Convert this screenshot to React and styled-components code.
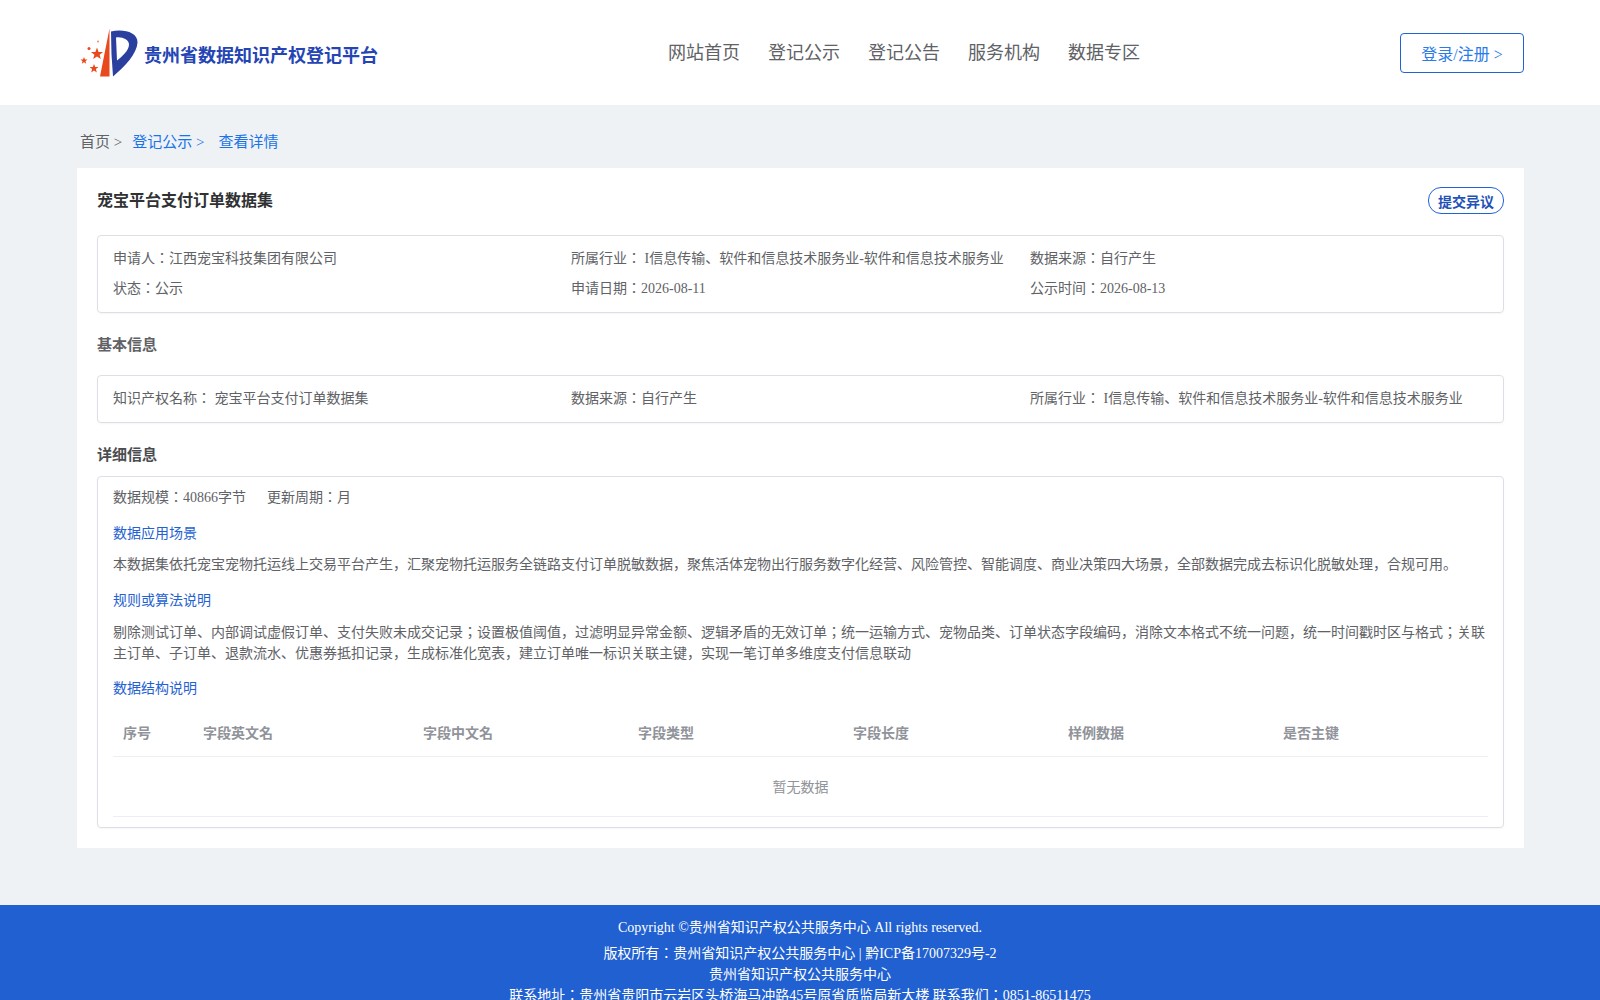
import React from "react";
import styled, { createGlobalStyle } from "styled-components";

const GlobalStyle = createGlobalStyle`
  * { box-sizing: border-box; }
  body {
    margin: 0;
    background: #eff2f5;
    font-family: "Liberation Serif", "Noto Sans CJK JP", serif;
    font-size: 14px;
    color: #606266;
  }
`;

const Header = styled.header`
  height: 105px;
  background: #fff;
  padding: 0 76px 0 80px;
  display: flex;
  align-items: center;
  justify-content: space-between;
`;

const Brand = styled.div`
  display: flex;
  align-items: center;
  width: 302px;
  gap: 6px;
  padding-top: 2px;
  span {
    font-size: 18px;
    font-weight: 700;
    color: #2545b5;
  }
`;

const Nav = styled.nav`
  display: flex;
  gap: 28px;
  margin: 0 0 4px 26px;
  a {
    font-size: 18px;
    color: #606266;
  }
`;

const LoginButton = styled.button`
  width: 124px;
  height: 40px;
  background: #fff;
  border: 1px solid #2062d8;
  border-radius: 4px;
  color: #2a7bea;
  font: inherit;
  font-size: 16px;
`;

const Crumbs = styled.div`
  display: flex;
  height: 63px;
  align-items: center;
  padding: 7px 0 0 80px;
  font-size: 15px;
  color: #606266;
`;

const Crumb = styled.a`
  color: ${(p) => (p.$active ? "#1a73e8" : "#606266")};
  margin-right: ${(p) => p.$gap}px;
`;

const Card = styled.main`
  margin: 0 76px 0 77px;
  background: #fff;
  padding: 20px;
`;

const TitleRow = styled.div`
  display: flex;
  justify-content: space-between;
  align-items: flex-start;
  height: 47px;
`;

const Title = styled.h1`
  margin: 1px 0 0;
  font-size: 16px;
  line-height: 24px;
  font-weight: 700;
  color: #303133;
`;

const ObjectionButton = styled.button`
  width: 76px;
  height: 27px;
  margin-top: -1px;
  padding: 0;
  background: #fff;
  border: 1px solid #2062d8;
  border-radius: 13px;
  color: #1f52b8;
  font: inherit;
  font-size: 14px;
  font-weight: 700;
`;

const Box = styled.section`
  border: 1px solid #dcdfe6;
  border-radius: 4px;
  padding: ${(p) => p.$padding || "0 15px"};
  box-shadow: 0 1px 2px rgba(0, 0, 0, 0.04);
`;

const InfoGrid = styled.div`
  display: grid;
  grid-template-columns: 458px 459px 1fr;
  padding: ${(p) => p.$padding};
  row-gap: ${(p) => p.$rowGap || 0}px;
  line-height: 20px;
`;

const SectionTitle = styled.h2`
  margin: 0;
  font-size: 15px;
  line-height: 20px;
  font-weight: 700;
  color: ${(p) => p.$color || "#606266"};
  padding: ${(p) => p.$padding};
`;

const MetaRow = styled.div`
  display: flex;
  gap: 21px;
  line-height: 20px;
  padding-top: 11px;
`;

const SubTitle = styled.h3`
  margin: 0;
  font-size: 14px;
  font-weight: 400;
  line-height: 20px;
  color: #1f62d0;
  padding: ${(p) => p.$top}px 0 ${(p) => p.$bottom}px;
`;

const Paragraph = styled.p`
  margin: 0;
  line-height: 21px;
  color: #606266;
`;

const Table = styled.table`
  width: 100%;
  border-collapse: collapse;
  table-layout: fixed;
  th {
    height: 48px;
    padding: 0 10px;
    text-align: left;
    font-weight: 700;
    font-size: 14px;
    color: #909399;
    border-bottom: 1px solid #ebeef5;
  }
  td {
    height: 60px;
    text-align: center;
    color: #909399;
    border-bottom: 1px solid #ebeef5;
  }
`;

const Footer = styled.footer`
  margin-top: 57px;
  background: #2060d0;
  color: #fff;
  text-align: center;
  padding: 12px 0 10px;
  line-height: 21px;
`;

const FooterTop = styled.div`
  margin-bottom: 5px;
`;

const Logo = () => (
  <svg width="58" height="52" viewBox="4 3.5 58 52">
    <path d="M33.5 4 L24 52 L33.5 52 Z" fill="#e8491d" />
    <path
      fillRule="evenodd"
      d="M35 7 C46 4 62 7 61.5 18 C61 29 49 42 37 52 L35.5 30 Z M40 13 C46 12 53 15 53 20 C53 26 46 32 41 36 Z"
      fill="#2b3f9f"
    />
    <polygon points="21,23 22.6,27.4 27,27.4 23.6,30.2 24.8,34.6 21,32 17.2,34.6 18.4,30.2 15,27.4 19.4,27.4" fill="#e8491d" />
    <polygon points="8,32.5 9,35 11.5,35 9.5,36.7 10.2,39.3 8,37.8 5.8,39.3 6.5,36.7 4.5,35 7,35" fill="#e8491d" />
    <polygon points="18,39.5 19.2,42.6 22.5,42.6 19.9,44.6 20.8,48 18,46 15.2,48 16.1,44.6 13.5,42.6 16.8,42.6" fill="#e8491d" />
    <circle cx="13" cy="24" r="1.5" fill="#e8491d" />
    <circle cx="22" cy="17" r="1" fill="#ee8a6a" />
  </svg>
);

const columns = ["序号", "字段英文名", "字段中文名", "字段类型", "字段长度", "样例数据", "是否主键"];
const widths = [80, 220, 215, 215, 215, 215, ""];

export default function App() {
  return (
    <>
      <GlobalStyle />
      <Header>
        <Brand>
          <Logo />
          <span>贵州省数据知识产权登记平台</span>
        </Brand>
        <Nav>
          <a>网站首页</a>
          <a>登记公示</a>
          <a>登记公告</a>
          <a>服务机构</a>
          <a>数据专区</a>
        </Nav>
        <LoginButton>登录/注册 &gt;</LoginButton>
      </Header>
      <Crumbs>
        <Crumb $gap={10}>首页 &gt;</Crumb>
        <Crumb $active $gap={14}>登记公示 &gt;</Crumb>
        <Crumb $active>查看详情</Crumb>
      </Crumbs>
      <Card>
        <TitleRow>
          <Title>宠宝平台支付订单数据集</Title>
          <ObjectionButton>提交异议</ObjectionButton>
        </TitleRow>
        <Box>
          <InfoGrid $padding="13px 0 13px" $rowGap={10}>
            <div>申请人：江西宠宝科技集团有限公司</div>
            <div>所属行业： I信息传输、软件和信息技术服务业-软件和信息技术服务业</div>
            <div>数据来源：自行产生</div>
            <div>状态：公示</div>
            <div>申请日期：2026-08-11</div>
            <div>公示时间：2026-08-13</div>
          </InfoGrid>
        </Box>
        <SectionTitle $padding="22px 0 20px">基本信息</SectionTitle>
        <Box>
          <InfoGrid $padding="13px 0 13px">
            <div>知识产权名称： 宠宝平台支付订单数据集</div>
            <div>数据来源：自行产生</div>
            <div>所属行业： I信息传输、软件和信息技术服务业-软件和信息技术服务业</div>
          </InfoGrid>
        </Box>
        <SectionTitle $color="#4a4c50" $padding="22px 0 11px">详细信息</SectionTitle>
        <Box $padding="0 15px 10px">
          <MetaRow>
            <span>数据规模：40866字节</span>
            <span>更新周期：月</span>
          </MetaRow>
          <SubTitle $top={16} $bottom={10}>数据应用场景</SubTitle>
          <Paragraph>本数据集依托宠宝宠物托运线上交易平台产生，汇聚宠物托运服务全链路支付订单脱敏数据，聚焦活体宠物出行服务数字化经营、风险管控、智能调度、商业决策四大场景，全部数据完成去标识化脱敏处理，合规可用。</Paragraph>
          <SubTitle $top={16} $bottom={11}>规则或算法说明</SubTitle>
          <Paragraph>剔除测试订单、内部调试虚假订单、支付失败未成交记录；设置极值阈值，过滤明显异常金额、逻辑矛盾的无效订单；统一运输方式、宠物品类、订单状态字段编码，消除文本格式不统一问题，统一时间戳时区与格式；关联主订单、子订单、退款流水、优惠券抵扣记录，生成标准化宽表，建立订单唯一标识关联主键，实现一笔订单多维度支付信息联动</Paragraph>
          <SubTitle $top={15} $bottom={9}>数据结构说明</SubTitle>
          <Table>
            <colgroup>
              {widths.map((w, i) => (
                <col key={i} width={w} />
              ))}
            </colgroup>
            <thead>
              <tr>
                {columns.map((c) => (
                  <th key={c}>{c}</th>
                ))}
              </tr>
            </thead>
            <tbody>
              <tr>
                <td colSpan={7}>暂无数据</td>
              </tr>
            </tbody>
          </Table>
        </Box>
      </Card>
      <Footer>
        <FooterTop>Copyright ©贵州省知识产权公共服务中心 All rights reserved.</FooterTop>
        <div>版权所有：贵州省知识产权公共服务中心 | 黔ICP备17007329号-2</div>
        <div>贵州省知识产权公共服务中心</div>
        <div>联系地址：贵州省贵阳市云岩区头桥海马冲路45号原省质监局新大楼 联系我们：0851-86511475</div>
      </Footer>
    </>
  );
}
